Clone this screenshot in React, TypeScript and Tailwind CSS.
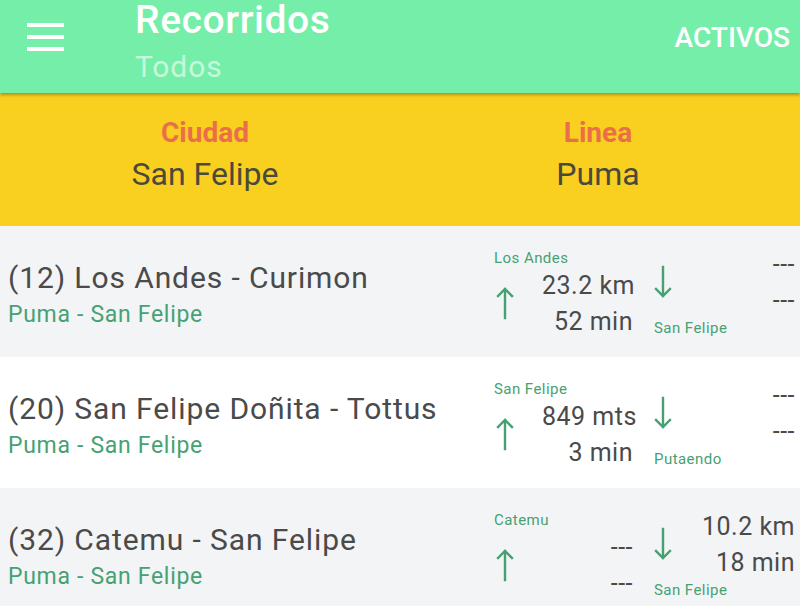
import React from 'react';

type Ruta = {
  nombre: string;
  sub: string;
  desde: string;
  hasta: string;
  ida: [string, string];
  vuelta: [string, string];
  bg: string;
};

const rutas: Ruta[] = [
  { nombre: '(12) Los Andes - Curimon', sub: 'Puma - San Felipe', desde: 'Los Andes', hasta: 'San Felipe', ida: ['23.2 km', '52 min'], vuelta: ['---', '---'], bg: 'bg-[#f3f4f6]' },
  { nombre: '(20) San Felipe Doñita - Tottus', sub: 'Puma - San Felipe', desde: 'San Felipe', hasta: 'Putaendo', ida: ['849 mts', '3 min'], vuelta: ['---', '---'], bg: 'bg-white' },
  { nombre: '(32) Catemu - San Felipe', sub: 'Puma - San Felipe', desde: 'Catemu', hasta: 'San Felipe', ida: ['---', '---'], vuelta: ['10.2 km', '18 min'], bg: 'bg-[#f3f4f6]' },
];

function Flecha({ up }: { up?: boolean }) {
  return (
    <svg width="18" height="34" viewBox="0 0 18 34" className={up ? '' : 'rotate-180'}>
      <path d="M9 32V3M2 10l7-7 7 7" fill="none" stroke="#45a072" strokeWidth="2.4" strokeLinecap="square" />
    </svg>
  );
}

function Fila({ r }: { r: Ruta }) {
  return (
    <div className={`flex h-[131px] ${r.bg}`}>
      <div className="flex-1 pl-2 pt-[34px]">
        <div className="whitespace-nowrap text-[30px] leading-[36px] tracking-[0.03em] text-[#4a4a4a]">{r.nombre}</div>
        <div className="mt-[5px] text-[23px] leading-[28px] tracking-[0.03em] text-[#47a173]">{r.sub}</div>
      </div>
      <div className="flex w-[306px] pr-[5px] text-[#4a4a4a]">
        <div className="w-[48px] pt-[23px]">
          <div className="whitespace-nowrap text-[15px] leading-[18px] tracking-[0.03em] text-[#47a173]">{r.desde}</div>
          <div className="ml-[2px] mt-[19px]"><Flecha up /></div>
        </div>
        <div className="w-[91px] whitespace-nowrap pt-[42px] text-right text-[25px] leading-[36px] tracking-[0.02em]">
          <div>{r.ida[0]}</div>
          <div>{r.ida[1]}</div>
        </div>
        <div className="ml-[21px] w-[40px] pt-[39px]">
          <Flecha />
          <div className="mt-[20px] whitespace-nowrap text-[15px] leading-[18px] tracking-[0.03em] text-[#47a173]">{r.hasta}</div>
        </div>
        <div className="w-[101px] whitespace-nowrap pt-[21px] text-right text-[25px] leading-[36px] tracking-[0.02em]">
          <div>{r.vuelta[0]}</div>
          <div>{r.vuelta[1]}</div>
        </div>
      </div>
    </div>
  );
}

export default function App() {
  return (
    <div className="h-[606px] w-[800px] overflow-hidden bg-white font-['Roboto',sans-serif]">
      <header className="relative z-10 flex h-[93px] bg-[#75eea9] shadow-[0_2px_3px_rgba(80,70,0,0.45)]">
        <div className="flex w-[135px] flex-col gap-[8.5px] pl-[27px] pt-[23px]">
          <span className="block h-[3.5px] w-[37px] bg-white" />
          <span className="block h-[3.5px] w-[37px] bg-white" />
          <span className="block h-[3.5px] w-[37px] bg-white" />
        </div>
        <div className="flex-1 pt-[1px]">
          <div className="text-[39px] font-medium leading-none tracking-[0.015em] text-white">Recorridos</div>
          <div className="mt-[11px] text-[30px] leading-[32px] tracking-[0.03em] text-white/60">Todos</div>
        </div>
        <div className="pr-[10px] pt-[22px] text-[28px] font-medium leading-[32px] text-white">ACTIVOS</div>
      </header>
      <section className="grid h-[133px] grid-cols-2 bg-[#fad020] pt-[23px] text-center">
        <div className="pl-[10px]">
          <div className="text-[28px] font-bold leading-[34px] text-[#eb6e4b]">Ciudad</div>
          <div className="mt-[4px] text-[32px] leading-[40px] text-[#4b4a3a]">San Felipe</div>
        </div>
        <div className="pr-[4px]">
          <div className="text-[28px] font-bold leading-[34px] text-[#eb6e4b]">Linea</div>
          <div className="mt-[4px] text-[32px] leading-[40px] text-[#4b4a3a]">Puma</div>
        </div>
      </section>
      {rutas.map((r) => <Fila key={r.nombre} r={r} />)}
    </div>
  );
}
